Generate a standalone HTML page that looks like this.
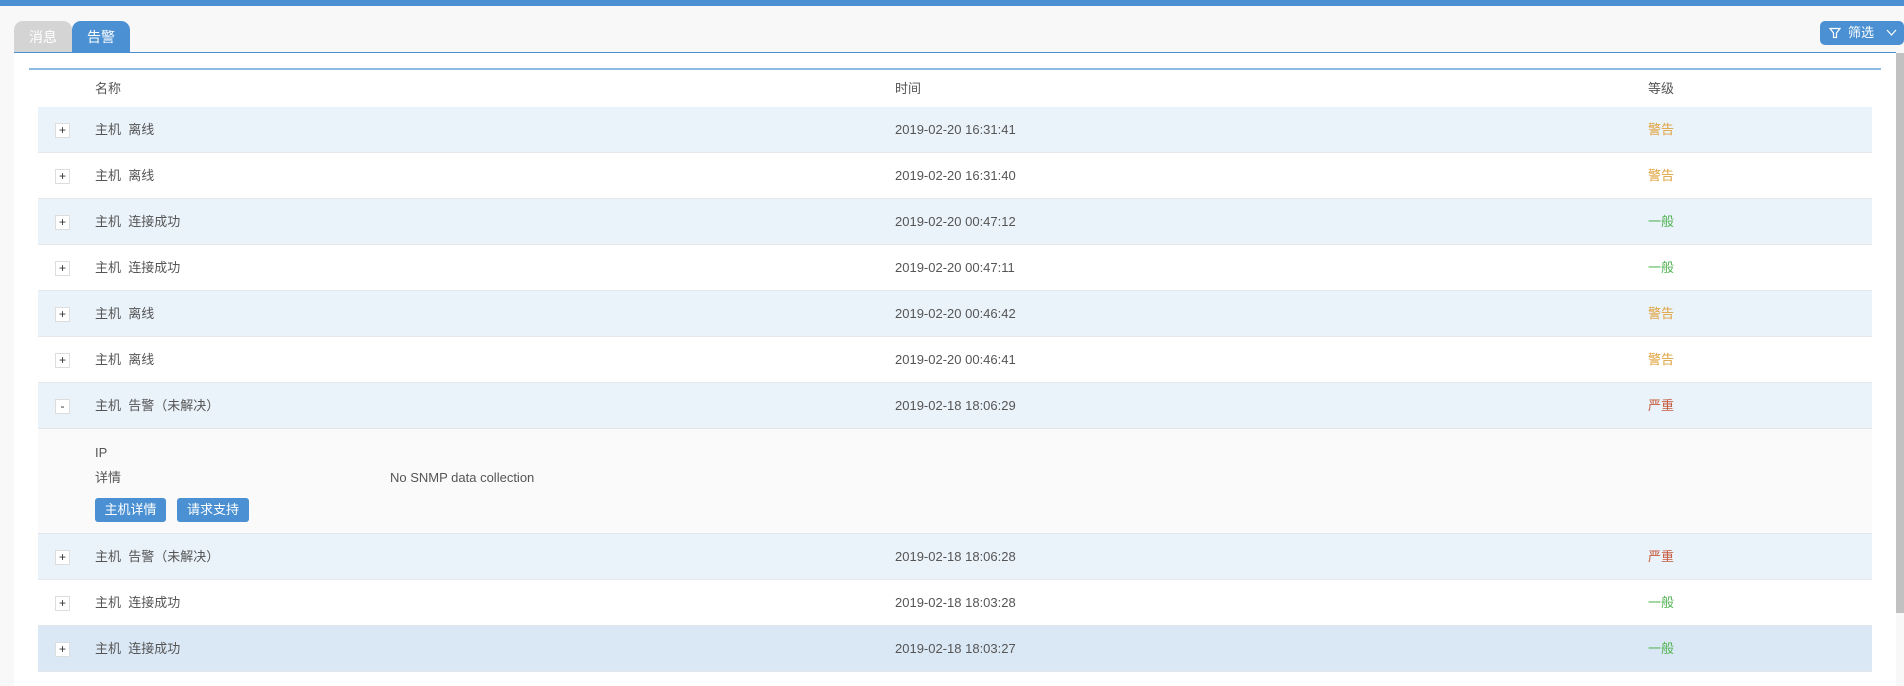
<!DOCTYPE html>
<html><head><meta charset="utf-8"><style>
*{margin:0;padding:0;box-sizing:border-box}
body{width:1904px;height:686px;background:#f8f8f8;font-family:"Liberation Sans","Noto Sans CJK SC",sans-serif;font-size:13px;color:#555;position:relative;overflow:hidden}
.top{position:absolute;left:0;top:0;width:1904px;height:6px;background:#4a90d2}
.tab{position:absolute;top:21px;height:31px;width:58px;border-radius:9px 9px 0 0;text-align:center;line-height:32px;font-size:14px;color:#fff}
.tl{position:absolute;left:14px;top:52px;width:1882px;height:1px;background:#4a90d2}
.panel{position:absolute;left:14px;top:53px;width:1882px;height:633px;background:#fff}
.hl{position:absolute;left:29px;top:68px;width:1852px;height:2px;background:#8bbbe3}
.t{position:absolute;white-space:nowrap;line-height:20px}
.row{position:absolute;left:38px;width:1834px;height:46px;border-bottom:1px solid #e3e6ea}
.row .b{position:absolute;left:17px;top:16px;width:15px;height:15px;border:1px solid #ddd;background:#fff;font-size:12px;line-height:12px;text-align:center;color:#333}
.row .n,.row .d,.row .l{position:absolute;top:0;line-height:46px;white-space:nowrap}
.row .n{left:57px}
.row .d{left:857px}
.row .l{left:1610px}
.w{color:#e0a23c}.g{color:#52b352}.s{color:#c75a3c}
.btn{position:absolute;top:498px;height:24px;background:#4a90d2;color:#fff;border-radius:3px;font-size:13px;line-height:24px;text-align:center}
</style></head><body>
<div class="top"></div>
<div class="tab" style="left:14px;background:#d4d4d4">消息</div>
<div class="tab" style="left:72px;background:#4a90d2">告警</div>
<div class="tl"></div>
<div style="position:absolute;left:1820px;top:21px;width:84px;height:24px;background:#4a90d2;border-radius:5px;color:#fff;font-size:13px;line-height:24px">
<svg style="position:absolute;left:9px;top:6px" width="12" height="12" viewBox="0 0 12 12"><path d="M1 1.5h10L7.5 6v4.5h-3V6z" fill="none" stroke="#fff" stroke-width="1.2"/></svg>
<span style="position:absolute;left:28px">筛选</span>
<svg style="position:absolute;left:66px;top:8px" width="11" height="8" viewBox="0 0 11 8"><path d="M1 1l4.5 5L10 1" fill="none" stroke="#fff" stroke-width="1.2"/></svg></div>
<div class="panel"></div>
<div style="position:absolute;left:1896px;top:53px;width:8px;height:560px;background:#c1c1c1"></div>
<div class="hl"></div>
<div class="t" style="left:95px;top:79px">名称</div>
<div class="t" style="left:895px;top:79px">时间</div>
<div class="t" style="left:1648px;top:79px">等级</div>
<div class="row" style="top:107px;background:#eaf2fa"><div class="b">+</div><div class="n">主机&nbsp;&nbsp;离线</div><div class="d">2019-02-20 16:31:41</div><div class="l w">警告</div></div>
<div class="row" style="top:153px;background:#fff"><div class="b">+</div><div class="n">主机&nbsp;&nbsp;离线</div><div class="d">2019-02-20 16:31:40</div><div class="l w">警告</div></div>
<div class="row" style="top:199px;background:#eaf2fa"><div class="b">+</div><div class="n">主机&nbsp;&nbsp;连接成功</div><div class="d">2019-02-20 00:47:12</div><div class="l g">一般</div></div>
<div class="row" style="top:245px;background:#fff"><div class="b">+</div><div class="n">主机&nbsp;&nbsp;连接成功</div><div class="d">2019-02-20 00:47:11</div><div class="l g">一般</div></div>
<div class="row" style="top:291px;background:#eaf2fa"><div class="b">+</div><div class="n">主机&nbsp;&nbsp;离线</div><div class="d">2019-02-20 00:46:42</div><div class="l w">警告</div></div>
<div class="row" style="top:337px;background:#fff"><div class="b">+</div><div class="n">主机&nbsp;&nbsp;离线</div><div class="d">2019-02-20 00:46:41</div><div class="l w">警告</div></div>
<div class="row" style="top:383px;background:#eaf2fa"><div class="b">-</div><div class="n">主机&nbsp;&nbsp;告警（未解决）</div><div class="d">2019-02-18 18:06:29</div><div class="l s">严重</div></div>
<div class="row" style="top:429px;height:105px;background:#fafafa"></div>
<div class="t" style="left:95px;top:443px">IP</div>
<div class="t" style="left:95px;top:468px">详情</div>
<div class="t" style="left:390px;top:468px">No SNMP data collection</div>
<div class="btn" style="left:95px;width:71px">主机详情</div>
<div class="btn" style="left:177px;width:72px">请求支持</div>
<div class="row" style="top:534px;background:#eaf2fa"><div class="b">+</div><div class="n">主机&nbsp;&nbsp;告警（未解决）</div><div class="d">2019-02-18 18:06:28</div><div class="l s">严重</div></div>
<div class="row" style="top:580px;background:#fff"><div class="b">+</div><div class="n">主机&nbsp;&nbsp;连接成功</div><div class="d">2019-02-18 18:03:28</div><div class="l g">一般</div></div>
<div class="row" style="top:626px;background:#dae8f5"><div class="b">+</div><div class="n">主机&nbsp;&nbsp;连接成功</div><div class="d">2019-02-18 18:03:27</div><div class="l g">一般</div></div>
</body></html>
